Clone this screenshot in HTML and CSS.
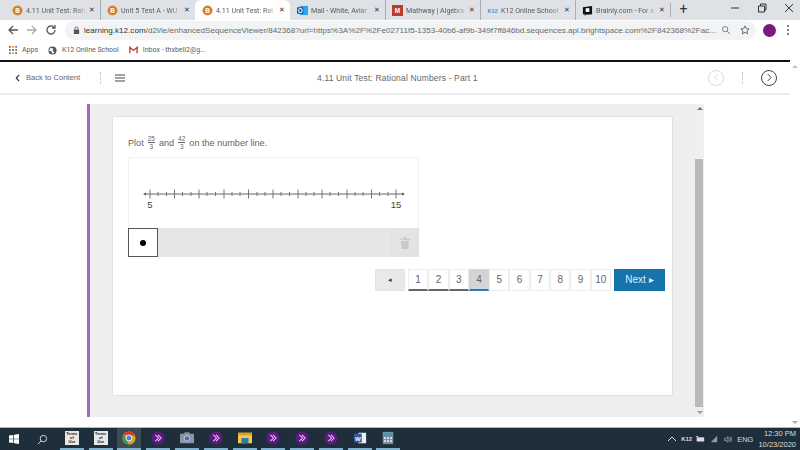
FILE: index.html
```html
<!DOCTYPE html>
<html lang="en">
<head>
<meta charset="utf-8">
<title>4.11 Unit Test: Rational Numbers - Part 1</title>
<link rel="stylesheet" href="styles.css">
</head>
<body>
<div class="tabs">
  <div class="tab"><svg class="fav" viewBox="0 0 12 12"><circle cx="6" cy="6" r="5.500" fill="#e08a2e"/><circle cx="6" cy="6" r="3.800" fill="none" stroke="#b9641a" stroke-width=".6"/><text x="6" y="8.300" class="favt">B</text></svg><span class="tab-t">4.11 Unit Test: Rati</span><span class="x">✕</span></div>
  <div class="tab sep"><svg class="fav" viewBox="0 0 12 12"><circle cx="6" cy="6" r="5.500" fill="#e08a2e"/><circle cx="6" cy="6" r="3.800" fill="none" stroke="#b9641a" stroke-width=".6"/><text x="6" y="8.300" class="favt">B</text></svg><span class="tab-t">Unit 5 Test A - WU</span><span class="x">✕</span></div>
  <div class="tab active"><svg class="fav" viewBox="0 0 12 12"><circle cx="6" cy="6" r="5.500" fill="#e08a2e"/><circle cx="6" cy="6" r="3.800" fill="none" stroke="#b9641a" stroke-width=".6"/><text x="6" y="8.300" class="favt">B</text></svg><span class="tab-t">4.11 Unit Test: Rat</span><span class="x">✕</span></div>
  <div class="tab"><svg class="fav" viewBox="0 0 12 12"><rect x="3" y="1" width="9" height="10" fill="#28a8ea"/><rect y="2.500" width="7" height="7" fill="#0a5a9c"/><text x="3.500" y="8.200" class="favt">O</text></svg><span class="tab-t">Mail - White, Aviar</span><span class="x">✕</span></div>
  <div class="tab sep"><svg class="fav" viewBox="0 0 12 12"><rect width="12" height="12" fill="#c0392b"/><text x="6" y="9" class="favt">M</text></svg><span class="tab-t">Mathway | Algebra</span><span class="x">✕</span></div>
  <div class="tab sep"><svg class="fav" viewBox="0 0 12 12"><text x="6" y="8.500" class="favk">K12</text></svg><span class="tab-t">K12 Online School</span><span class="x">✕</span></div>
  <div class="tab sep"><svg class="fav" viewBox="0 0 12 12"><path d="M1 2.500l10-1.500v9l-7 .5-1 1.500v-1.800H1z" fill="#111"/><rect x="4" y="3.500" width="4" height="4" fill="#fff"/></svg><span class="tab-t">Brainly.com - For s</span><span class="x">✕</span></div>
  <div class="plus sep">+</div>
  <div class="win">
    <svg viewBox="0 0 10 10"><path d="M1 5h8" stroke="#333" fill="none"/></svg>
    <svg viewBox="0 0 10 10"><path d="M1.500 3h6v6h-6zM3.500 3V1h5.500v6h-1.500" stroke="#333" fill="none"/></svg>
    <svg viewBox="0 0 10 10"><path d="M1 1l8 8M9 1l-8 8" stroke="#333" fill="none"/></svg>
  </div>
</div>
<div class="toolbar">
  <svg class="nav" viewBox="0 0 12 12"><path d="M11 6H2M6 2L2 6l4 4" stroke="#555" stroke-width="1.300" fill="none"/></svg>
  <svg class="nav" viewBox="0 0 12 12"><path d="M1 6h9M6 2l4 4-4 4" stroke="#aaa" stroke-width="1.300" fill="none"/></svg>
  <svg class="nav" viewBox="0 0 12 12"><path d="M10 6a4 4 0 1 1-1.200-2.900M10 1v3H7" stroke="#555" stroke-width="1.300" fill="none"/></svg>
  <div class="omni">
    <svg class="lock" viewBox="0 0 8 10"><rect x="1" y="4" width="6" height="5" fill="#555"/><path d="M2.200 4V2.800a1.800 1.800 0 0 1 3.600 0V4" stroke="#555" fill="none"/></svg>
    <span class="url"><b>learning.k12.com</b>/d2l/le/enhancedSequenceViewer/842368?url=https%3A%2F%2Fe02711f5-1353-40b6-af9b-349f7ff846bd.sequences.api.brightspace.com%2F842368%2Fac...</span>
    <svg class="omi" viewBox="0 0 12 12"><circle cx="5" cy="5" r="3.200" stroke="#666" fill="none"/><path d="M7.500 7.500L11 11" stroke="#666"/></svg>
    <svg class="omi" viewBox="0 0 12 12"><path d="M6 1l1.500 3.300 3.500.4-2.600 2.400.7 3.500L6 8.800 2.900 10.600l.7-3.500L1 4.700l3.500-.4z" stroke="#555" fill="none"/></svg>
  </div>
  <span class="avatar"></span>
  <svg class="dots" viewBox="0 0 4 12"><circle cx="2" cy="2" r="1" fill="#555"/><circle cx="2" cy="6" r="1" fill="#555"/><circle cx="2" cy="10" r="1" fill="#555"/></svg>
</div>
<div class="bookmarks">
  <span class="bm"><svg class="grid" viewBox="0 0 9 9"><g fill="#d33"><rect width="2" height="2"/><rect x="3.500" width="2" height="2" fill="#e8a200"/><rect x="7" width="2" height="2" fill="#2a7de1"/><rect y="3.500" width="2" height="2" fill="#2a7de1"/><rect x="3.500" y="3.500" width="2" height="2"/><rect x="7" y="3.500" width="2" height="2" fill="#2a9d4a"/><rect y="7" width="2" height="2" fill="#2a9d4a"/><rect x="3.500" y="7" width="2" height="2" fill="#e8a200"/><rect x="7" y="7" width="2" height="2"/></g></svg>Apps</span>
  <span class="bm"><svg class="globe" viewBox="0 0 10 10"><circle cx="5" cy="5" r="4.500" fill="#555"/><path d="M3 2l3 1-1 2 2 2-2 2-1-3-3-1z" fill="#fff"/></svg>K12 Online School</span>
  <span class="bm"><svg class="gmail" viewBox="0 0 10 8"><path d="M1 7.500V1l4 3.500L9 1v6.500" stroke="#c9392c" stroke-width="1.500" fill="none"/></svg>Inbox - thxbell2@g...</span>
</div>
<div class="viewport">
  <div class="page">
    <header class="head">
      <div class="back"><svg class="chev" viewBox="0 0 6 10"><path d="M5 1L1.500 5 5 9" stroke="#333" stroke-width="1.500" fill="none"/></svg><span>Back to Content</span></div>
      <span class="dotrule"></span>
      <svg class="burger" viewBox="0 0 10 8"><path d="M0 1h10M0 4h10M0 7h10" stroke="#444"/></svg>
      <div class="title">4.11 Unit Test: Rational Numbers - Part 1</div>
      <span class="circ off"><svg viewBox="0 0 6 10"><path d="M5 1L1 5l4 4" stroke="#ccc" fill="none"/></svg></span>
      <span class="dotrule light"></span>
      <span class="circ"><svg viewBox="0 0 6 10"><path d="M1 1l4 4-4 4" stroke="#333" stroke-width="1.200" fill="none"/></svg></span>
    </header>
    <div class="main">
      <div class="panel">
        <div class="panel-scroll">
          <section class="card">
            <p class="q">Plot <span class="frac"><span class="num">25</span><span>3</span></span> and <span class="frac"><span class="num">42</span><span>3</span></span> on the number line.</p>
            <div class="widget">
              <div class="plot">
                <svg class="line" viewBox="0 0 291 62" width="291" height="62">
                  <path d="M18 36H274" stroke="#666" stroke-width="1"/>
                  <path d="M18 34.500l-3 1.500 3 1.500zM274 34.500l3 1.500-3 1.500z" fill="#555"/>
                  <path stroke="#777" d="M22 31.500v9M46.500 31.500v9M71 31.500v9M96 31.500v9M120.500 31.500v9M145 31.500v9M170 31.500v9M194 31.500v9M219 31.500v9M243.500 31.500v9M268 31.500v9M30 34v4M38.500 34v4M54.500 34v4M63 34v4M79 34v4M87.500 34v4M104 34v4M112 34v4M129 34v4M137 34v4M153 34v4M161.500 34v4M178 34v4M186 34v4M202 34v4M210.500 34v4M227 34v4M235 34v4M251.500 34v4M260 34v4"/>
                  <text x="22" y="50" class="lab">5</text>
                  <text x="268" y="50" class="lab">15</text>
                </svg>
              </div>
              <div class="tray">
                <div class="pt"><span class="dot"></span></div>
                <div class="trash"><svg viewBox="0 0 10 12" width="10" height="12"><path d="M0 2h10v1H0zM3.500 0h3v2h-3zM1 4h8l-.7 8H1.700z" fill="#c9c9c9"/></svg></div>
              </div>
            </div>
            <nav class="pager">
              <span class="prev">◂</span>
              <div class="nums">
                <span class="n done">1</span><span class="n done">2</span><span class="n done">3</span><span class="n cur">4</span><span class="n">5</span><span class="n">6</span><span class="n">7</span><span class="n">8</span><span class="n">9</span><span class="n">10</span>
              </div>
              <span class="next">Next ▸</span>
            </nav>
          </section>
        </div>
        <div class="sb inner"><span class="up"></span><span class="thumb"></span><span class="down"></span></div>
      </div>
    </div>
  </div>
  <div class="sb outer"><span class="up"></span><span class="down"></span></div>
</div>
<footer class="taskbar">
  <svg class="winlogo" viewBox="0 0 10 10"><path d="M0 1.500l4.300-.6v3.800H0zM5 .8L10 0v4.700H5zM0 5.300h4.300v3.800L0 8.500zM5 5.300h5V10l-5-.8z" fill="#fff"/></svg>
  <svg class="search" viewBox="0 0 12 12"><circle cx="7" cy="5" r="3.500" stroke="#ddd" fill="none"/><path d="M4.500 7.500L1 11" stroke="#ddd"/></svg>
  <span class="app"><span class="doc">Terms<br>of<br>Use</span></span>
  <span class="app"><span class="doc">Terms<br>of<br>Use</span></span>
  <span class="app on"><svg class="ic" viewBox="0 0 16 16"><circle cx="8" cy="8" r="7.500" fill="#d9a520"/><path d="M8 .5a7.500 7.500 0 0 1 6.900 4.500H8z" fill="#d9392c"/><path d="M1.800 3.800L5 9l3 6.500A7.500 7.500 0 0 1 1.800 3.800z" fill="#3a9a4a"/><path d="M1.800 3.800A7.500 7.500 0 0 1 8 .5V5H5z" fill="#d9392c"/><circle cx="8" cy="8" r="3.400" fill="#4a80e0" stroke="#fff"/></svg></span>
  <span class="app"><svg class="ic" viewBox="0 0 16 16"><circle cx="8" cy="8" r="7.500" fill="#5e1a80"/><path d="M5 4.500L8.500 8 5 11.500M8 4.500L11.500 8 8 11.500" stroke="#e7c8f0" stroke-width="1.200" fill="none"/></svg></span>
  <span class="app"><svg class="ic" viewBox="0 0 16 16"><rect y="3" width="16" height="11" rx="1" fill="#8b96a0"/><rect x="5" y="1.500" width="6" height="2" fill="#8b96a0"/><circle cx="8" cy="8.500" r="3.200" fill="#4a6fb0" stroke="#cfd6dc"/></svg></span>
  <span class="app"><svg class="ic" viewBox="0 0 16 16"><circle cx="8" cy="8" r="7.500" fill="#5e1a80"/><path d="M5 4.500L8.500 8 5 11.500M8 4.500L11.500 8 8 11.500" stroke="#e7c8f0" stroke-width="1.200" fill="none"/></svg></span>
  <span class="app"><svg class="ic" viewBox="0 0 16 16"><rect y="2" width="16" height="12" fill="#f2c94c"/><rect y="2" width="16" height="3" fill="#d9a520"/><rect x="4" y="8" width="8" height="6" fill="#2c7ea8"/></svg></span>
  <span class="app"><svg class="ic" viewBox="0 0 16 16"><circle cx="8" cy="8" r="7.500" fill="#5e1a80"/><path d="M5 4.500L8.500 8 5 11.500M8 4.500L11.500 8 8 11.500" stroke="#e7c8f0" stroke-width="1.200" fill="none"/></svg></span>
  <span class="app"><svg class="ic" viewBox="0 0 16 16"><circle cx="8" cy="8" r="7.500" fill="#5e1a80"/><path d="M5 4.500L8.500 8 5 11.500M8 4.500L11.500 8 8 11.500" stroke="#e7c8f0" stroke-width="1.200" fill="none"/></svg></span>
  <span class="app"><svg class="ic" viewBox="0 0 16 16"><circle cx="8" cy="8" r="7.500" fill="#5e1a80"/><path d="M5 4.500L8.500 8 5 11.500M8 4.500L11.500 8 8 11.500" stroke="#e7c8f0" stroke-width="1.200" fill="none"/></svg></span>
  <span class="app"><svg class="ic" viewBox="0 0 16 16"><rect x="6" y="2" width="9" height="12" fill="#e8eef5"/><rect x="1" y="3" width="9" height="10" fill="#2b5a9e"/><text x="5.500" y="11" class="favt">W</text></svg></span>
  <span class="app"><svg class="ic" viewBox="0 0 16 16"><rect x="2" y="1" width="12" height="14" fill="#7d8f9c"/><rect x="3.500" y="2.500" width="9" height="3" fill="#2c9ec4"/><path d="M3.500 7h2v2h-2zM7 7h2v2H7zM10.500 7h2v2h-2zM3.500 10.500h2v2h-2zM7 10.500h2v2H7zM10.500 10.500h2v2h-2z" fill="#e8eef5"/></svg></span>
  <div class="tray-r">
    <svg class="tic" viewBox="0 0 10 6"><path d="M1 5l4-4 4 4" stroke="#ddd" fill="none"/></svg>
    <b class="k">K12</b>
    <svg class="tic" viewBox="0 0 12 8"><rect x="2" y="2" width="9" height="5" fill="#ddd"/><path d="M1 1h3" stroke="#ddd"/></svg>
    <svg class="tic" viewBox="0 0 10 10"><path d="M1 9L9 1v8z" fill="#8d979d"/></svg>
    <svg class="tic" viewBox="0 0 10 10"><path d="M1 4h2l2-2v7L3 7H1zM7 3q1.500 2 0 5M8.500 2q2 3 0 7" stroke="#ddd" fill="none" stroke-width=".7"/></svg>
    <span class="lang">ENG</span>
    <span class="clock">12:30 PM<br>10/23/2020</span>
  </div>
</footer>
</body>
</html>
```
FILE: styles.css
```css
*{box-sizing:border-box}
html,body{margin:0;height:100%}
body{width:800px;height:450px;overflow:hidden;display:flex;flex-direction:column;font-family:"Liberation Sans",Arial,sans-serif;background:#fff;color:#555}
.tabs{height:20px;flex:none;background:#dee1e6;display:flex;align-items:center;padding-left:5px;font:7.100px Roboto,"Liberation Sans",sans-serif;color:#4d4d4d}
.tab{width:95px;height:20px;display:flex;align-items:center;padding-left:7px;white-space:nowrap;flex:none}
.tab.active{background:#fff;border-radius:6px 6px 0 0;padding-left:7px}
.sep{border-left:1px solid #a9adb3;background-clip:padding-box}
.tab.sep{padding-left:6px}
.fav{width:11px;height:11px;flex:none;margin-right:3px}
.favt{font:bold 7px "Liberation Sans",sans-serif;fill:#fff;text-anchor:middle}
.favk{font:bold 6px "Liberation Sans",sans-serif;fill:#2a9fd6;text-anchor:middle}
.tab-t{width:62px;color:#5a5a5a;-webkit-mask-image:linear-gradient(90deg,#000 78%,transparent)}
.x{font-size:7px;margin-left:1px;color:#333}
.plus{font-size:14px;width:26px;height:14px;line-height:13px;text-align:center;color:#333}
.win{margin-left:auto;display:flex;gap:17px;width:70px;align-items:center;height:20px}
.win svg{width:10px;height:10px;flex:none;margin-bottom:4px}
.toolbar{height:20px;flex:none;display:flex;align-items:center;padding-left:7px;background:#fff}
.nav{width:12px;height:12px;margin-right:7px;flex:none}
.omni{margin-left:1px;width:691px;height:19px;border-radius:10px;background:#f1f3f4;display:flex;align-items:center;padding:0 8px;font-size:8.100px;color:#6a6a6a;white-space:nowrap}
.lock{width:7px;height:9px;flex:none;margin-right:4px}
.url{width:630px;flex:none}
.url b{font-weight:400;color:#333}
.omi{width:10px;height:10px;flex:none;margin-left:7px}
.omi+.omi{margin-left:9px}
.avatar{width:13px;height:13px;border-radius:50%;background:#7a1a7d;margin-left:7px;flex:none}
.dots{width:4px;height:12px;margin-left:10px;flex:none}
.bookmarks{height:20px;flex:none;display:flex;align-items:center;padding-left:9px;font:7px Roboto,"Liberation Sans",sans-serif;color:#5a5a5a;gap:10px}
.bm{display:flex;align-items:center;gap:5px}
.grid{width:8px;height:8px}
.globe{width:9px;height:9px}
.gmail{width:9px;height:8px}
.viewport{flex:1;min-height:0;display:flex}
.page{flex:1;display:flex;flex-direction:column;min-width:0;border-top:2px solid #111}
.head{height:33px;flex:none;display:flex;align-items:center;padding-left:15px;border-bottom:2px solid #ececec}
.back{display:flex;align-items:center;gap:6px;font-size:7.600px;color:#666;width:85px}
.chev{width:5px;height:8px}
.dotrule{width:1px;height:12px;border-left:1px dotted #bbb;flex:none}
.burger{width:10px;height:8px;margin-left:14px;flex:none}
.title{flex:none;margin-left:192px;font-size:8.500px;letter-spacing:.16px;color:#666;white-space:nowrap}
.circ{width:16px;height:16px;border:1px solid #444;border-radius:50%;display:flex;align-items:center;justify-content:center;flex:none}
.circ svg{width:5px;height:9px}
.circ.off{border-color:#ddd;margin-left:auto}
.dotrule.light{margin:0 18px}
.circ:last-child{margin-right:13px}
.main{flex:1;min-height:0;padding:9px 86px 10px 87px;display:flex}
.panel{flex:1;display:flex;background:#eee;border-left:3px solid #a865c0;min-width:0}
.panel-scroll{flex:1;padding:12px 22px 21px 22px;min-width:0}
.card{height:100%;background:#fff;border:1px solid #e2e2e2;padding:15px 0 0 15px}
.q{margin:0;font-size:9.100px;height:21px;display:flex;align-items:center;gap:3px;color:#666}
.frac{display:inline-flex;flex-direction:column;align-items:center;font-size:6.500px;line-height:7px;margin:0 1px}
.num{border-bottom:1px solid #666}
.widget{width:291px;margin-top:4px}
.plot{height:71px;border:1px solid #f0f0f0;border-bottom:0}
.line{display:block;margin-left:-1px}
.lab{font-size:9.500px;fill:#444;text-anchor:middle}
.tray{height:29px;background:#e6e6e6;display:flex;justify-content:space-between}
.pt{width:30px;height:29px;border:1px solid #555;background:#fff;display:flex;align-items:center;justify-content:center}
.dot{width:6px;height:6px;border-radius:50%;background:#000}
.trash{width:29px;display:flex;align-items:center;justify-content:center;background:#e3e3e3}
.pager{display:flex;align-items:flex-start;margin-top:12px;margin-left:247px;font-size:10px;color:#666}
.prev{flex:none;width:30px;height:22px;background:#e9e9e9;border:1px solid #e2e2e2;font-size:7px;line-height:20px;text-align:center;color:#333}
.nums{display:flex;margin-left:3px;flex:none}
.n{width:20.300px;height:22px;border:1px solid #eee;line-height:20px;text-align:center;background:#fff}
.n.done{border-bottom:2px solid #666}
.n.cur{background:#d4d4d4;border-color:#d4d4d4;border-bottom:2px solid #2b7ab5}
.next{flex:none;width:51px;height:22px;margin-left:3px;background:#1673ac;color:#dfeef8;line-height:22px;text-align:center;font-size:10px}
.sb{flex:none;display:flex;flex-direction:column;justify-content:space-between}
.sb.inner{width:9px;background:#efefef;position:relative}
.sb.outer{width:10px;background:#fff;padding-top:2px}
.up,.down{height:9px;display:flex;align-items:center;justify-content:center}
.up::before{content:"";border:3px solid transparent;border-top:0;border-bottom:3px solid #777}
.down::before{content:"";border:3px solid transparent;border-bottom:0;border-top:3px solid #999}
.outer .up::before{border-bottom-color:#c5c5c5}
.outer .down::before{border-top-color:#aaa}
.thumb{position:absolute;left:0;right:1px;top:55px;bottom:10px;background:#b9b9b9}
.taskbar{height:23px;flex:none;background:#1e2f3b;display:flex;align-items:center;padding-left:9px;color:#ddd;border-top:1px solid #b5babd}
.winlogo{width:10px;height:10px;flex:none}
.search{width:11px;height:11px;margin-left:18px;margin-right:9.500px;flex:none}
.app{width:24px;height:22px;margin:0 2.400px;display:flex;align-items:center;justify-content:center;flex:none;border-bottom:2px solid #7fb0d0}
.app.on{background:#3b4a55}
.doc{width:14px;height:14px;background:#e8e8e8;color:#111;font:bold 3.800px/4.200px "Liberation Sans",sans-serif;text-align:center;display:block;overflow:hidden;padding-top:1px}
.ic{width:14px;height:14px}
.tray-r{margin-left:auto;display:flex;align-items:center;gap:4px;font-size:7.500px;padding-right:4px;color:#ddd}
.tic{width:10px;height:8px;flex:none}
.k{font-size:6px;width:10px}
.lang{margin:0 1px 0 0}
.clock{text-align:right;line-height:11px;font-size:7.500px}
```
